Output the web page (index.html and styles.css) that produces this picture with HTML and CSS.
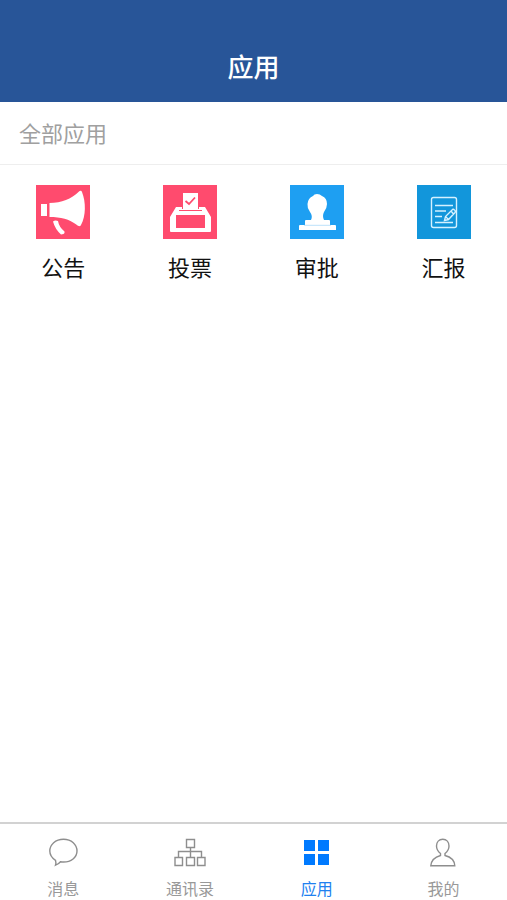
FILE: index.html
```html
<!DOCTYPE html>
<html lang="zh-CN">
<head>
    <meta charset="UTF-8">
    <meta name="viewport" content="width=device-width, initial-scale=1.0">
    <title>应用</title>
    <link rel="stylesheet" href="styles.css">
</head>
<body>
    <header>
        <h1>应用</h1>
    </header>

    <main>
        <h2>全部应用</h2>
        <div class="apps">
            <a class="app" href="#notice">
                <svg class="pink" viewBox="0 0 54 54" fill="#fff">
                    <rect x="5" y="19" width="6" height="12"/>
                    <path d="M13.5 18C26 18 35 14 43 6.5C44 5.5 45.5 5.5 46 7C50 17 50 31 45 40C44 42 42 41 41 40C33 34 25 32 13.5 32Z"/>
                    <path d="M17 36.5Q19 35 22 36Q23 42 28.5 46.5Q29 48 27.5 49L25 49.5Q19 44 17 36.5Z"/>
                </svg>
                <span>公告</span>
            </a>
            <a class="app" href="#vote">
                <svg class="pink" viewBox="0 0 54 54">
                    <path fill="#fff" fill-rule="evenodd" d="M13 22H42L48 32V46Q48 47 47 47H8Q7 47 7 46V32ZM13 30V43H42V30Z"/>
                    <path fill="none" stroke="#ff4b6e" d="M16 25.5H39"/>
                    <rect x="19" y="7" width="17" height="17" fill="#ff4b6e"/>
                    <rect x="20" y="8" width="15" height="17" fill="#fff"/>
                    <path fill="none" stroke="#ff4b6e" stroke-width="1.8" d="M22.5 16L26 19L32 12.5"/>
                </svg>
                <span>投票</span>
            </a>
            <a class="app" href="#approve">
                <svg class="sky" viewBox="0 0 54 54" fill="#fff">
                    <path d="M27 9Q30 9 32 11Q37 13 37 19Q37 23 34 27Q32 31 34 35H39Q40 35 40 36V40H45Q46 40 46 41V45H9V41Q9 40 10 40H15V36Q15 35 16 35H21Q23 31 20 27Q17 23 17.5 19Q18 13 23 11Q24 9 27 9Z"/>
                    <path fill="none" stroke="#8dcdf6" stroke-width="0.6" d="M14 40.3H41"/>
                </svg>
                <span>审批</span>
            </a>
            <a class="app" href="#report">
                <svg class="blue" viewBox="0 0 54 54" fill="none" stroke="#d5f1ff" stroke-width="1.4">
                    <rect x="14.5" y="12.5" width="25" height="30" rx="2"/>
                    <path d="M18 20.5H36M18 26H29M18 31.5H25M18 37.5H36"/>
                    <path fill="#1296db" d="M27.5 35.5L28.5 31.5L35.5 24.5Q36.5 24 37.5 25Q39 26 38 27.5L31.5 34.5ZM34 26L36.5 29M28.5 31.5L31.5 34.5"/>
                </svg>
                <span>汇报</span>
            </a>
        </div>
    </main>

    <nav class="tabs">
        <a class="tab" href="#messages">
            <svg viewBox="0 0 32 32">
                <path d="M8.5 24.3C5 22 2.8 19 2.8 15C2.8 8.5 8.5 3.2 16.5 3.2S30 8.5 30 15S24 26 16.5 26Q15 26 13.5 25.7Q11.5 28 8.5 29.2Q9.3 27 8.5 24.3Z"/>
            </svg>
            <span>消息</span>
        </a>
        <a class="tab" href="#contacts">
            <svg viewBox="0 0 32 32">
                <path d="M12.5 3.5H20.5V11.5H12.5ZM1 21.5H8.5V29.5H1ZM12.5 21.5H20.5V29.5H12.5ZM23.5 21.5H31V29.5H23.5ZM16.5 11.5V21.5M4.5 21.5V15.5H27.5V21.5"/>
            </svg>
            <span>通讯录</span>
        </a>
        <a class="tab active" href="#apps">
            <svg viewBox="0 0 32 32">
                <path d="M3 4H14V15H3ZM17 4H28V15H17ZM3 18H14V29H3ZM17 18H28V29H17Z"/>
            </svg>
            <span>应用</span>
        </a>
        <a class="tab" href="#me">
            <svg viewBox="0 0 32 32">
                <path d="M12.5 19.5V17.5C10 15.5 8.5 13 8.5 10C8.5 6 11 3.2 14.8 3.2S21 6 21 10C21 13 19.5 15.5 17 17.5V19.5C23 21 26.5 24 26.8 29.8H2.8C3.3 24 7 21 12.5 19.5Z"/>
            </svg>
            <span>我的</span>
        </a>
    </nav>
</body>
</html>
```

FILE: styles.css
```css
* {
    box-sizing: border-box;
}
body {
    font-family: "Noto Sans CJK SC", sans-serif;
    margin: 0;
    min-height: 100vh;
    display: flex;
    flex-direction: column;
    background: #fff;
    color: #111;
}
a {
    color: inherit;
    text-decoration: none;
}
header {
    background: #285598;
    color: #fff;
    text-align: center;
    padding: 46px 20px 16px;
}
h1 {
    margin: 0;
    font-size: 26px;
    line-height: 40px;
    font-weight: 500;
}
main {
    flex: 1;
}
h2 {
    margin: 0;
    padding: 14px 19px 16px;
    font-size: 22px;
    line-height: 32px;
    font-weight: 400;
    color: #a0a0a0;
    border-bottom: 1px solid #eee;
}
.apps {
    display: grid;
    grid-template-columns: repeat(4, 1fr);
    padding-top: 20px;
}
.app {
    display: flex;
    flex-direction: column;
    align-items: center;
    gap: 11px;
    font-size: 22px;
    line-height: 32px;
}
.app svg {
    width: 54px;
    height: 54px;
}
.pink {
    background: #ff4b6e;
}
.sky {
    background: #1e9ff2;
}
.blue {
    background: #1296db;
}
.tabs {
    display: grid;
    grid-template-columns: repeat(4, 1fr);
    border-top: 2px solid #d2d2d2;
    padding-top: 12px;
}
.tab {
    display: flex;
    flex-direction: column;
    align-items: center;
    gap: 8px;
    color: #999;
    font-size: 16px;
    line-height: 24px;
}
.tab svg {
    width: 32px;
    height: 32px;
    fill: none;
    stroke: #8e8e8e;
    stroke-width: 1.4;
}
.active {
    color: #2080f0;
}
.tab.active svg {
    fill: #007aff;
    stroke: none;
}
```
